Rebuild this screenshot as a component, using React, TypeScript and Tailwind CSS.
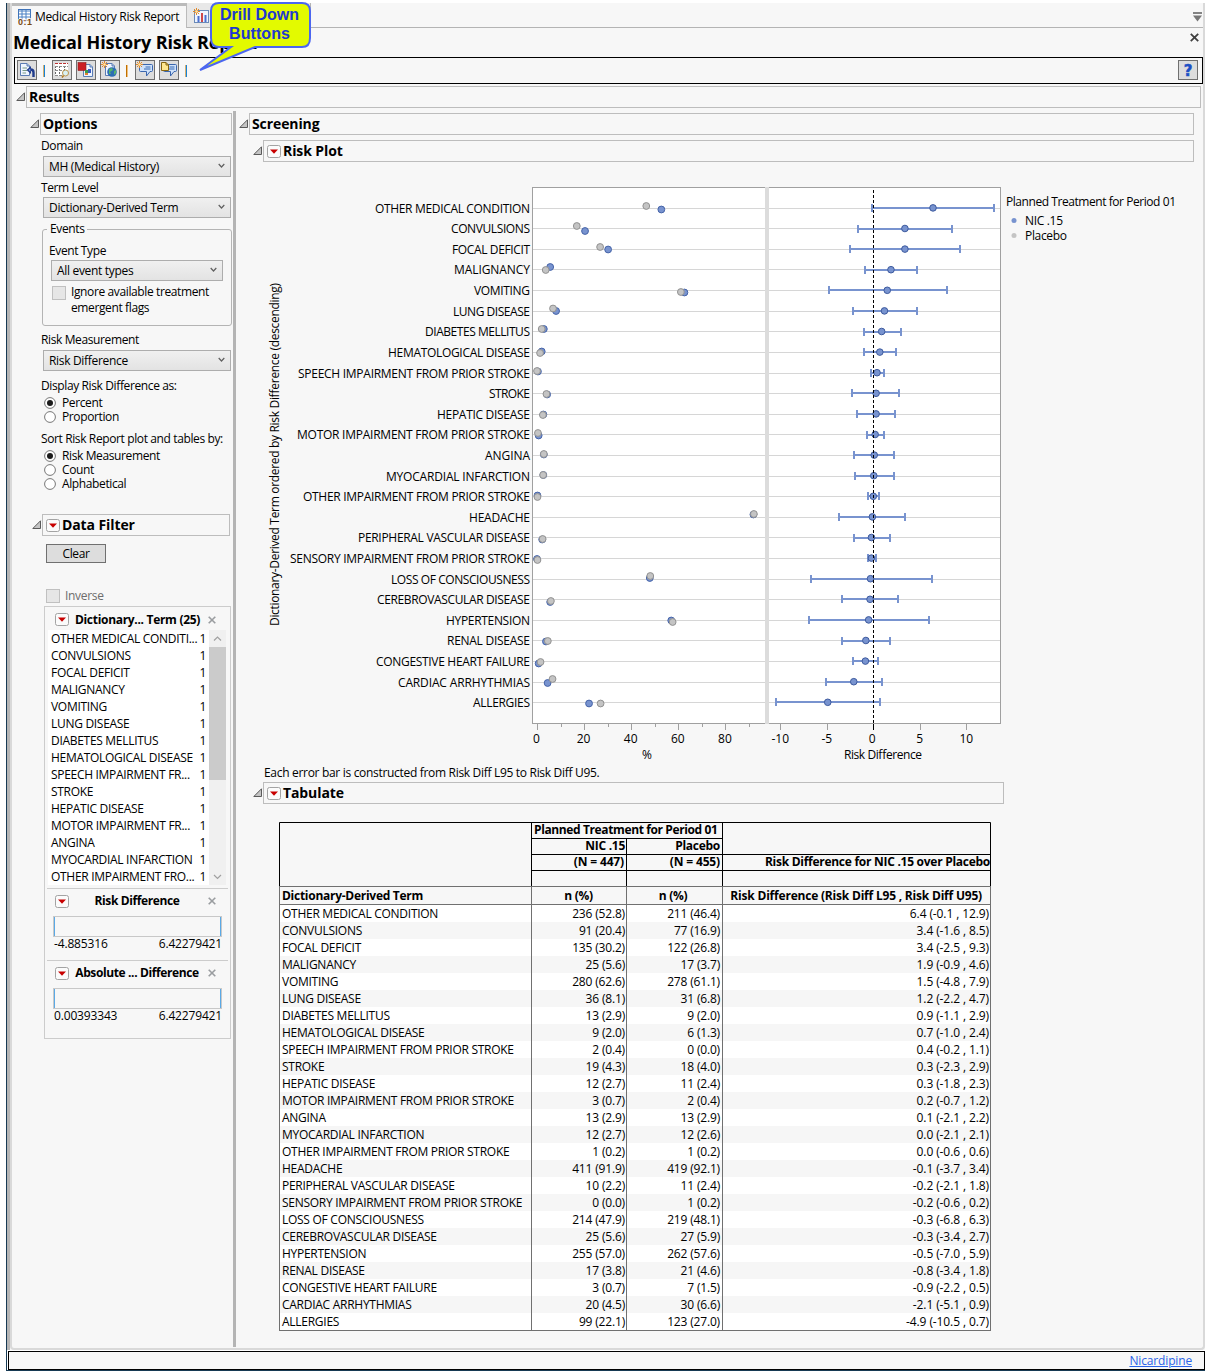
import type { ReactNode } from "react";

type Row = {
  term: string;
  labelWidth: number;
  nic: string;
  placebo: string;
  diff: string;
  // plotted values: percent NIC, percent placebo, risk diff, lower, upper
  v: [number, number, number, number, number];
  // jittered heights of the two dots
  y: [number, number];
};

const ROWS: Row[] = [
  { term: "OTHER MEDICAL CONDITION", labelWidth: 155, nic: "236 (52.8)", placebo: "211 (46.4)", diff: "6.4 (-0.1 , 12.9)", v: [52.8, 46.4, 6.42, -0.1, 12.95], y: [209.5, 206] },
  { term: "CONVULSIONS", labelWidth: 79, nic: "91 (20.4)", placebo: "77 (16.9)", diff: "3.4 (-1.6 , 8.5)", v: [20.4, 16.9, 3.4, -1.65, 8.5], y: [231, 226] },
  { term: "FOCAL DEFICIT", labelWidth: 78, nic: "135 (30.2)", placebo: "122 (26.8)", diff: "3.4 (-2.5 , 9.3)", v: [30.2, 26.8, 3.4, -2.5, 9.3], y: [249.5, 247] },
  { term: "MALIGNANCY", labelWidth: 76, nic: "25 (5.6)", placebo: "17 (3.7)", diff: "1.9 (-0.9 , 4.6)", v: [5.6, 3.7, 1.9, -0.9, 4.65], y: [267, 270] },
  { term: "VOMITING", labelWidth: 56, nic: "280 (62.6)", placebo: "278 (61.1)", diff: "1.5 (-4.8 , 7.9)", v: [62.6, 61.1, 1.5, -4.8, 7.9], y: [292.5, 292] },
  { term: "LUNG DISEASE", labelWidth: 77, nic: "36 (8.1)", placebo: "31 (6.8)", diff: "1.2 (-2.2 , 4.7)", v: [8.1, 6.8, 1.2, -2.2, 4.7], y: [311, 308.5] },
  { term: "DIABETES MELLITUS", labelWidth: 105, nic: "13 (2.9)", placebo: "9 (2.0)", diff: "0.9 (-1.1 , 2.9)", v: [2.9, 2, 0.9, -1, 2.95], y: [329, 329] },
  { term: "HEMATOLOGICAL DISEASE", labelWidth: 142, nic: "9 (2.0)", placebo: "6 (1.3)", diff: "0.7 (-1.0 , 2.4)", v: [2, 1.3, 0.7, -0.95, 2.4], y: [351.5, 353] },
  { term: "SPEECH IMPAIRMENT FROM PRIOR STROKE", labelWidth: 232, nic: "2 (0.4)", placebo: "0 (0.0)", diff: "0.4 (-0.2 , 1.1)", v: [0.4, 0, 0.4, -0.2, 1.1], y: [371.5, 371] },
  { term: "STROKE", labelWidth: 41, nic: "19 (4.3)", placebo: "18 (4.0)", diff: "0.3 (-2.3 , 2.9)", v: [4.3, 4, 0.3, -2.3, 2.8], y: [394.5, 394] },
  { term: "HEPATIC DISEASE", labelWidth: 93, nic: "12 (2.7)", placebo: "11 (2.4)", diff: "0.3 (-1.8 , 2.3)", v: [2.7, 2.5, 0.3, -1.8, 2.3], y: [414.5, 415] },
  { term: "MOTOR IMPAIRMENT FROM PRIOR STROKE", labelWidth: 233, nic: "3 (0.7)", placebo: "2 (0.4)", diff: "0.2 (-0.7 , 1.2)", v: [0.7, 0.4, 0.2, -0.7, 1.2], y: [435.5, 433] },
  { term: "ANGINA", labelWidth: 45, nic: "13 (2.9)", placebo: "13 (2.9)", diff: "0.1 (-2.1 , 2.2)", v: [2.9, 2.9, 0.1, -2.1, 2.2], y: [454.5, 454] },
  { term: "MYOCARDIAL INFARCTION", labelWidth: 144, nic: "12 (2.7)", placebo: "12 (2.6)", diff: "0.0 (-2.1 , 2.1)", v: [2.7, 2.6, 0.05, -2, 2.2], y: [475, 475] },
  { term: "OTHER IMPAIRMENT FROM PRIOR STROKE", labelWidth: 227, nic: "1 (0.2)", placebo: "1 (0.2)", diff: "0.0 (-0.6 , 0.6)", v: [0.2, 0.2, 0, -0.6, 0.6], y: [495.5, 497] },
  { term: "HEADACHE", labelWidth: 61, nic: "411 (91.9)", placebo: "419 (92.1)", diff: "-0.1 (-3.7 , 3.4)", v: [91.9, 92.1, -0.1, -3.7, 3.4], y: [514.5, 514] },
  { term: "PERIPHERAL VASCULAR DISEASE", labelWidth: 172, nic: "10 (2.2)", placebo: "11 (2.4)", diff: "-0.2 (-2.1 , 1.8)", v: [2.2, 2.4, -0.2, -2.1, 1.8], y: [539.5, 539] },
  { term: "SENSORY IMPAIRMENT FROM PRIOR STROKE", labelWidth: 240, nic: "0 (0.0)", placebo: "1 (0.2)", diff: "-0.2 (-0.6 , 0.2)", v: [0, 0.2, -0.2, -0.6, 0.25], y: [559, 560] },
  { term: "LOSS OF CONSCIOUSNESS", labelWidth: 139, nic: "214 (47.9)", placebo: "219 (48.1)", diff: "-0.3 (-6.8 , 6.3)", v: [47.9, 48.1, -0.3, -6.7, 6.3], y: [578, 576] },
  { term: "CEREBROVASCULAR DISEASE", labelWidth: 153, nic: "25 (5.6)", placebo: "27 (5.9)", diff: "-0.3 (-3.4 , 2.7)", v: [5.6, 5.9, -0.35, -3.4, 2.7], y: [602, 601] },
  { term: "HYPERTENSION", labelWidth: 84, nic: "255 (57.0)", placebo: "262 (57.6)", diff: "-0.5 (-7.0 , 5.9)", v: [57, 57.6, -0.5, -6.9, 5.95], y: [620.5, 622] },
  { term: "RENAL DISEASE", labelWidth: 83, nic: "17 (3.8)", placebo: "21 (4.6)", diff: "-0.8 (-3.4 , 1.8)", v: [3.8, 4.6, -0.8, -3.4, 1.75], y: [641.5, 641] },
  { term: "CONGESTIVE HEART FAILURE", labelWidth: 154, nic: "3 (0.7)", placebo: "7 (1.5)", diff: "-0.9 (-2.2 , 0.5)", v: [0.7, 1.5, -0.85, -2.2, 0.5], y: [663.5, 662] },
  { term: "CARDIAC ARRHYTHMIAS", labelWidth: 132, nic: "20 (4.5)", placebo: "30 (6.6)", diff: "-2.1 (-5.1 , 0.9)", v: [4.5, 6.6, -2.1, -5.1, 0.9], y: [683, 679] },
  { term: "ALLERGIES", labelWidth: 57, nic: "99 (22.1)", placebo: "123 (27.0)", diff: "-4.9 (-10.5 , 0.7)", v: [22.1, 27, -4.9, -10.45, 0.7], y: [703.5, 703.5] },
];

const FILTER_ITEMS = [
  "OTHER MEDICAL CONDITI...",
  "CONVULSIONS",
  "FOCAL DEFICIT",
  "MALIGNANCY",
  "VOMITING",
  "LUNG DISEASE",
  "DIABETES MELLITUS",
  "HEMATOLOGICAL DISEASE",
  "SPEECH IMPAIRMENT FR...",
  "STROKE",
  "HEPATIC DISEASE",
  "MOTOR IMPAIRMENT FR...",
  "ANGINA",
  "MYOCARDIAL INFARCTION",
  "OTHER IMPAIRMENT FRO...",
];

const px = (v: number) => 537 + v * 2.355;
const rx = (v: number) => 873.3 + v * 9.3;
const rowY = (i: number) => Math.floor(208.15 + i * 20.61) + 0.5;
const barY = (i: number) => Math.round(208 + i * 20.6);

function Disclosure() {
  return (
    <svg width="10" height="10" viewBox="0 0 10 10" className="shrink-0">
      <path d="M8.5 0.8V8.5H0.8Z" fill="#c4c4c4" stroke="#5a5a5a" />
    </svg>
  );
}

function RedMenu() {
  return (
    <svg width="14" height="13" viewBox="0 0 14 13" className="shrink-0">
      <rect x="0.5" y="0.5" width="13" height="12" rx="2" fill="#fbfbfb" stroke="#a3a3a3" />
      <path d="M3 4.5H11L7 8.7Z" fill="#c80000" />
    </svg>
  );
}

function OutlineBox({ title, menu, width }: { title: string; menu?: boolean; width: string }) {
  return (
    <div className="flex h-[22px] items-center">
      <Disclosure />
      <div className={`flex h-[22px] shrink-0 items-center border border-[#bdbdbd] text-[14px] font-bold leading-none ${menu ? "gap-[2px] pl-[3px]" : "pl-[2px]"} ${width}`}>
        {menu && <RedMenu />}
        <span className="tracking-[-0.1px]">{title}</span>
      </div>
    </div>
  );
}

function Select({ value, width }: { value: string; width: string }) {
  return (
    <div className={`flex h-[21px] items-center justify-between border border-[#adadad] bg-linear-to-b from-[#f0f0f0] to-[#e3e3e3] pr-[5px] pl-[5px] ${width}`}>
      <span className="tracking-[-0.32px]">{value}</span>
      <svg width="7" height="6" viewBox="0 0 7 6" className="mb-[2px]">
        <path d="M0.7 1L3.5 4L6.3 1" fill="none" stroke="#606060" strokeWidth="1.2" />
      </svg>
    </div>
  );
}

function Radio({ label, checked }: { label: string; checked?: boolean }) {
  return (
    <div className="flex h-[14px] items-center gap-[6px] pl-[3px]">
      <svg width="12" height="12" viewBox="0 0 12 12">
        <circle cx="6" cy="6" r="5.4" fill="#fff" stroke="#777" />
        {checked && <circle cx="6" cy="6" r="3" fill="#1c1c1c" />}
      </svg>
      <span>{label}</span>
    </div>
  );
}

function CloseMark({ color, size }: { color: string; size: number }) {
  return (
    <svg width={size} height={size} viewBox="0 0 8 8" className="shrink-0">
      <path d="M0.7 0.7L7.3 7.3M7.3 0.7L0.7 7.3" stroke={color} strokeWidth="1.6" />
    </svg>
  );
}

function ToolButton({ children }: { children: ReactNode }) {
  return (
    <div className="flex size-5 items-center justify-center border border-[#707070] bg-[#dddddd]">
      <svg width="18" height="18" viewBox="0 0 18 18">
        {children}
      </svg>
    </div>
  );
}

function Sep({ flip }: { flip?: boolean }) {
  return (
    <div className="flex h-[21px] w-[15px] items-center pl-[6px]">
      <div className={flip ? "h-3 w-px bg-[#c07000]" : "h-3 w-px bg-[#d8b070]"} />
      <div className={flip ? "h-3 w-px bg-[#f0c080]" : "h-3 w-px bg-[#1883d7]"} />
    </div>
  );
}

function Page({ x, y }: { x: number; y: number }) {
  return (
    <g transform={`translate(${x} ${y})`}>
      <path d="M0.5 0.5H7L9.5 3V12.5H0.5Z" fill="#eef5ff" stroke="#5b7cb4" />
      <path d="M7 0.5V3H9.5" fill="#b8cbe8" stroke="#5b7cb4" />
    </g>
  );
}

function Bubble() {
  return (
    <g>
      <path d="M3.5 4.5Q3.5 3.5 4.5 3.5H15.5Q16.5 3.5 16.5 4.5V9.5Q16.5 10.5 15.5 10.5H14L10.5 15V10.5H4.5Q3.5 10.5 3.5 9.5Z" fill="#cfe2fa" stroke="#3a66ae" />
      <path d="M9.5 6H14.5M8 8H14.5" stroke="#3568b5" />
    </g>
  );
}

function Star({ x, y }: { x: number; y: number }) {
  return (
    <g transform={`translate(${x} ${y})`}>
      <path d="M3.5 0V7M0 3.5H7M1 1L6 6M6 1L1 6" stroke="#e08a2c" />
      <circle cx="3.5" cy="3.5" r="1.3" fill="#ffe7a8" />
    </g>
  );
}

function Toolbar() {
  return (
    <div className="ml-[2px] flex h-[27px] w-[1189px] items-start border border-black pt-[2px] pr-[4px] pl-[2px]">
      <ToolButton>
        <Page x={2} y={2} />
        <path d="M4.5 7H9M4.5 9.5H9M4.5 12H8" stroke="#7a9b87" />
        <path d="M15.5 16V11.5Q15.5 8.5 12.5 8.5" fill="none" stroke="#203c8c" strokeWidth="2.4" />
        <path d="M8.5 9L13 5V13Z" fill="#203c8c" />
        <path d="M10.5 9L12.3 7.5V10.5Z" fill="#7fa0e8" />
      </ToolButton>
      <Sep />
      <div className="flex gap-1">
        <ToolButton>
          <rect x="2" y="2" width="13" height="13" fill="#fff" />
          <path d="M2 2.5H15" stroke="#b33" strokeDasharray="3 1" />
          <path d="M2.5 5V15M6.5 5V15M11.5 5V10" stroke="#666" strokeDasharray="2 1" />
          <path d="M2 5.5H15M2 9.5H11M2 14.5H9" stroke="#8d8d8d" strokeDasharray="3 1" />
          <circle cx="12.5" cy="12" r="3" fill="#d9f2f5" stroke="#bb934d" />
          <path d="M10.5 14.5L9 16.5" stroke="#b07a20" strokeWidth="1.5" />
        </ToolButton>
        <ToolButton>
          <Page x={6} y={3} />
          <rect x="1" y="1.5" width="8" height="8" fill="#cb2026" stroke="#8d2020" strokeWidth="0.6" />
          <rect x="8" y="9" width="3" height="4" fill="#3a9d4c" />
          <rect x="11" y="8" width="3" height="4" fill="#3a5cc0" />
          <rect x="8" y="12" width="3" height="2" fill="#e08030" />
        </ToolButton>
        <ToolButton>
          <Page x={4} y={2} />
          <circle cx="11" cy="11" r="4.8" fill="#2c6db4" />
          <path d="M8 8L11 7L12 9L9 11L10 13L8 13ZM13 10L15 9V12L13 14Z" fill="#55b46d" />
          <Star x={0} y={0} />
        </ToolButton>
      </div>
      <Sep flip />
      <div className="flex gap-1">
        <ToolButton>
          <Bubble />
          <Star x={0} y={0} />
        </ToolButton>
        <ToolButton>
          <Bubble />
          <path d="M1.5 1.5H6L8.5 4V9.5H1.5Z" fill="#ffe790" stroke="#87650f" />
          <path d="M6 1.5V4H8.5" fill="none" stroke="#87650f" />
        </ToolButton>
      </div>
      <Sep />
      <div className="ml-auto">
        <ToolButton>
          <text x="9" y="14.5" textAnchor="middle" fontFamily="DejaVu Sans" fontWeight="700" fontSize="15" fill="#1d4fc4" stroke="#1d4fc4" strokeWidth="0.5">?</text>
        </ToolButton>
      </div>
    </div>
  );
}

function TabStrip() {
  return (
    <div className="flex h-[25px] w-[1191px]">
      <div className="flex h-[25px] w-[175px] items-center gap-[2px] border-t-[3px] border-r border-[#bbbbbb] pl-[6px]">
        <svg width="15" height="16" viewBox="0 0 15 16" className="shrink-0">
          <rect x="0.5" y="0.5" width="12" height="11" fill="#fff" stroke="#3f73b8" />
          <path d="M0 2H13M1 5H13M1 8H13M4 1V11M8 1V11" stroke="#4a80c4" />
          <text x="0" y="15.5" fontSize="9" fontWeight="700" fontFamily="Liberation Sans" fill="#7b4a10" stroke="#f7f7f7" strokeWidth="1.5" paintOrder="stroke" textLength="14">0:1</text>
        </svg>
        <span className="tracking-[-0.33px] whitespace-nowrap">Medical History Risk Report</span>
      </div>
      <div className="flex h-[25px] w-[124px] items-start border-r border-b border-[#b4b4b4] bg-[#e8e8e8] pt-[5px] pl-[6px]">
        <svg width="17" height="16" viewBox="0 0 17 16">
          <rect x="1.5" y="2.5" width="14" height="12" fill="#eef4ff" stroke="#6a8ab8" />
          <path d="M5.5 14V8M12.5 14V7" stroke="#4a6fd0" strokeWidth="2" />
          <path d="M9 14V5" stroke="#d04848" strokeWidth="2" />
          <Star x={0} y={0} />
        </svg>
      </div>
      <div className="flex flex-1 justify-end border-b border-[#b4b4b4] pt-[9px] pr-px">
        <svg width="9" height="10" viewBox="0 0 9 10">
          <path d="M0 1H9" stroke="#666" strokeWidth="1.6" />
          <path d="M0 3.5H9L4.5 9.5Z" fill="#777" />
        </svg>
      </div>
    </div>
  );
}

function RangeFilter({ title, min, max }: { title: string; min: string; max: string }) {
  return (
    <div className="mx-[2px] h-[72px] border-t border-[#cccccc]">
      <div className="flex h-[24px] items-center pr-[12px] pl-[8px]">
        <RedMenu />
        <span className="flex-1 pr-[3px] text-center font-bold tracking-[-0.38px] whitespace-nowrap">{title}</span>
        <CloseMark color="#9a9da0" size={8} />
      </div>
      <div className="mt-[3px] ml-[6px] h-[21px] w-[169px] border border-[#c8c8c8]">
        <div className="h-[19px] border-r border-l border-[#5aa9e6]" />
      </div>
      <div className="-mt-px flex h-[15px] w-[175px] items-center justify-between pl-[7px] tracking-[-0.16px]">
        <span>{min}</span>
        <span>{max}</span>
      </div>
    </div>
  );
}

function OptionsPanel() {
  return (
    <div className="w-[221px] pt-[2px] pl-[12px] text-[12px] leading-[14px] tracking-[-0.38px]">
      <div className="pl-[6px]">
        <OutlineBox title="Options" width="w-[192px]" />
      </div>
      <div className="pl-[17px]">
        <div className="mt-[4px]">Domain</div>
        <div className="mt-[3px] ml-[2px]"><Select value="MH (Medical History)" width="w-[188px]" /></div>
        <div className="mt-[4px]">Term Level</div>
        <div className="mt-[2px] ml-[2px]"><Select value="Dictionary-Derived Term" width="w-[188px]" /></div>
        <fieldset className="mt-[4px] ml-px h-[104px] w-[190px] rounded-[3px] border border-[#b4b4b4] pl-[7px]">
          <legend className="-ml-[3px] px-[3px]">Events</legend>
          <div className="-ml-px mt-[8px]">Event Type</div>
          <div className="mt-[2px] ml-px"><Select value="All event types" width="w-[172px]" /></div>
          <div className="mt-[4px] ml-[2px] flex gap-[5px]">
            <div className="mt-px size-[14px] shrink-0 border border-[#c0c0c0] bg-[#e6e6e6]" />
            <div className="-mt-px leading-[16px] whitespace-nowrap">Ignore available treatment<br />emergent flags</div>
          </div>
        </fieldset>
        <div className="mt-[7px]">Risk Measurement</div>
        <div className="mt-[3px] ml-[2px]"><Select value="Risk Difference" width="w-[188px]" /></div>
        <div className="mt-[8px] mb-[3px]">Display Risk Difference as:</div>
        <Radio label="Percent" checked />
        <Radio label="Proportion" />
        <div className="mt-[8px] mb-[3px] whitespace-nowrap">Sort Risk Report plot and tables by:</div>
        <Radio label="Risk Measurement" checked />
        <Radio label="Count" />
        <Radio label="Alphabetical" />
      </div>
      <div className="mt-[23px] pl-[8px]">
        <OutlineBox title="Data Filter" menu width="w-[188px]" />
      </div>
      <div className="mt-[8px] ml-[22px] flex h-[19px] w-[60px] items-center justify-center border border-[#707070] bg-[#dddddd]">Clear</div>
      <div className="mt-[26px] ml-[22px] flex h-[14px] items-center gap-[5px] tracking-[-0.3px] text-[#6d6d6d]">
        <div className="size-[14px] border border-[#c0c0c0] bg-[#e6e6e6]" />
        <span>Inverse</span>
      </div>
      <div className="mt-[3px] ml-[20px] h-[433px] w-[187px] border border-[#cccccc]">
        <div className="flex h-[23px] items-center pt-[2px] pr-[14px] pl-[10px]">
          <RedMenu />
          <span className="flex-1 pr-[2px] text-center font-bold whitespace-nowrap tracking-[-0.3px]">Dictionary... Term (25)</span>
          <CloseMark color="#9a9da0" size={8} />
        </div>
        <div className="ml-[3px] flex h-[255px] w-[178px] bg-white">
          <ul className="flex-1 pr-[3px] pl-[3px]">
            {FILTER_ITEMS.map((item) => (
              <li key={item} className="flex h-[17px] items-center justify-between tracking-[-0.3px] whitespace-nowrap">
                <span>{item}</span>
                <span>1</span>
              </li>
            ))}
          </ul>
          <div className="flex w-[17px] flex-col items-center justify-between bg-[#f0f0f0]">
            <svg width="17" height="17" viewBox="0 0 17 17">
              <path d="M5 10.5L8.5 7L12 10.5" fill="none" stroke="#a0a0a0" strokeWidth="1.2" />
            </svg>
            <div className="mb-auto h-[133px] w-full bg-[#cbcbcb]" />
            <svg width="17" height="17" viewBox="0 0 17 17">
              <path d="M5 7L8.5 10.5L12 7" fill="none" stroke="#a0a0a0" strokeWidth="1.2" />
            </svg>
          </div>
        </div>
        <div className="mt-[3px]">
          <RangeFilter title="Risk Difference" min="-4.885316" max="6.42279421" />
          <RangeFilter title="Absolute ... Difference" min="0.00393343" max="6.42279421" />
        </div>
      </div>
    </div>
  );
}

function RiskPlot() {
  return (
    <svg width="942" height="602" viewBox="252 162 942 602" fontSize="12" fill="#000" className="block">
      <rect x="532.5" y="187.5" width="468" height="536" fill="#fff" stroke="#a0a0a0" />
      {ROWS.map((r, i) => (
        <path key={r.term} d={`M533 ${rowY(i)}H1000`} stroke="#d6d6d6" />
      ))}
      <rect x="765" y="187" width="4" height="537" fill="#dcdcdc" />
      {ROWS.map((r, i) => (
        <text key={r.term} x={530 - r.labelWidth} y={rowY(i) + 4.5} textLength={r.labelWidth}>
          {r.term}
        </text>
      ))}
      {ROWS.map((r, i) => (
        <g key={r.term}>
          <circle cx={px(r.v[0])} cy={r.y[0]} r="3.4" fill="#7893cf" stroke="#4664a8" />
          <circle cx={px(r.v[1])} cy={r.y[1]} r="3.4" fill="#c4c4c4" stroke="#929292" />
          <path
            d={`M${Math.round(rx(r.v[3]))} ${barY(i)}H${Math.round(rx(r.v[4]))}M${Math.round(rx(r.v[3]))} ${barY(i) - 4}v8M${Math.round(rx(r.v[4]))} ${barY(i) - 4}v8`}
            stroke="#7893cf"
            strokeWidth="2"
          />
          <circle cx={rx(r.v[2])} cy={207.9 + i * 20.6} r="3.3" fill="#7893cf" stroke="#3d5a9e" />
        </g>
      ))}
      <path d="M873.5 190V724" stroke="#000" strokeDasharray="3 2" />
      {[0, 20, 40, 60, 80].map((t) => (
        <g key={t}>
          <path d={`M${Math.round(px(t)) + 0.5} 724v6`} stroke="#a0a0a0" />
          <path d={`M${Math.round(px(t + 10)) + 0.5} 724v3`} stroke="#a0a0a0" />
          <text x={px(t) - 0.5} y="743" textAnchor="middle">{t}</text>
        </g>
      ))}
      {[-10, -5, 0, 5, 10].map((t) => (
        <g key={t}>
          <path d={`M${Math.round(rx(t)) + 0.5} 724v6`} stroke={t === 0 ? "#000" : "#a0a0a0"} />
          <text x={rx(t) - (t === 0 ? 1 : 0)} y="743" textAnchor="middle">{t}</text>
        </g>
      ))}
      <text x="642" y="759">%</text>
      <text x="844" y="759" textLength="78">Risk Difference</text>
      <text transform="translate(279 626) rotate(-90)" textLength="343">
        Dictionary-Derived Term ordered by Risk Difference (descending)
      </text>
      <text x="1006" y="206" textLength="170">Planned Treatment for Period 01</text>
      <circle cx="1014" cy="220.5" r="2.5" fill="#7893cf" />
      <text x="1025" y="225" textLength="38">NIC .15</text>
      <circle cx="1014" cy="235.5" r="2.5" fill="#c4c4c4" />
      <text x="1025" y="240" textLength="42">Placebo</text>
    </svg>
  );
}

function Tabulate() {
  return (
    <div className="w-[712px] border border-[#707070] border-t-black text-[12px] leading-[14px] tracking-[-0.27px] whitespace-nowrap">
      <div className="-mx-px grid h-[63px] grid-cols-[252px_191px_267px] border-x border-black font-bold">
        <div className="border-r border-black" />
        <div className="grid grid-rows-[16px_16px_16px_15px] border-r border-black">
          <div className="border-b border-black pl-[2px] tracking-[-0.38px]">Planned Treatment for Period 01</div>
          <div className="grid grid-cols-[95px_95px] border-b border-black text-right">
            <span className="border-r border-black pr-px">NIC .15</span>
            <span className="pr-[2px]">Placebo</span>
          </div>
          <div className="grid grid-cols-[95px_95px] border-b border-black text-right tracking-[-0.15px]">
            <span className="border-r border-black pr-[2px]">(N = 447)</span>
            <span className="pr-[2px]">(N = 455)</span>
          </div>
          <div className="w-[95px] border-r border-black" />
        </div>
        <div className="grid grid-rows-[32px_16px_15px]">
          <div className="border-b border-black" />
          <div className="border-b border-black text-right">Risk Difference for NIC .15 over Placebo</div>
          <div />
        </div>
      </div>
      <div className="grid h-[19px] grid-cols-[252px_95px_96px_267px] border-t border-b border-[#707070] leading-[18px] font-bold">
        <span className="border-r border-[#707070] pl-[2px]">Dictionary-Derived Term</span>
        <span className="border-r border-[#707070] pr-px text-center">n (%)</span>
        <span className="border-r border-[#707070] pr-[3px] text-center">n (%)</span>
        <span className="pr-[8px] text-right tracking-[-0.2px]">Risk Difference (Risk Diff L95 , Risk Diff U95)</span>
      </div>
      {ROWS.map((r) => (
        <div key={r.term} className="grid h-[17px] grid-cols-[252px_95px_96px_267px] leading-[17px] odd:bg-white even:bg-[#f6f6f6]">
          <span className="border-r border-[#707070] pl-[2px]">{r.term}</span>
          <span className="border-r border-[#707070] pr-px text-right tracking-[-0.17px]">{r.nic}</span>
          <span className="border-r border-[#707070] pr-[2px] text-right tracking-[-0.17px]">{r.placebo}</span>
          <span className="pr-px text-right tracking-[-0.1px]">{r.diff}</span>
        </div>
      ))}
    </div>
  );
}

function Callout() {
  return (
    <svg width="118" height="74" viewBox="196 0 118 74" className="absolute top-0 left-[196px]">
      <path
        d="M219 3H302Q310 3 310 11V38Q310 47 302 47H255L200 70L231 47H219Q211 47 211 38V11Q211 3 219 3Z"
        fill="#e3fa00"
        stroke="#4b66f0"
        strokeWidth="2"
      />
      <g fontFamily="Liberation Sans" fontWeight="700" fontSize="16" fill="#2038d0">
        <text x="220" y="20" textLength="79">Drill Down</text>
        <text x="229" y="39" textLength="61">Buttons</text>
      </g>
    </svg>
  );
}

export default function App() {
  return (
    <div className="relative h-[1371px] w-[1205px] overflow-hidden bg-white pt-[3px] pl-[6px] font-['Open_Sans','Noto_Sans',sans-serif] text-[12px] text-black">
      <div className="h-[1368px] border-b border-l border-[#173a54]">
        <div className="h-[1347px] border-l-[3px] border-[#b5b5b5] bg-[#f7f7f7]">
          <div className="h-[1347px] rounded-b-[4px] border-2 border-t-0 border-[#d9d9d9]">
            <TabStrip />
            <div className="flex h-[29px] items-start justify-between pr-[4px] pl-[1px]">
              <h1 className="pt-[2px] text-[18px] leading-[24px] font-bold tracking-[-0.15px]">Medical History Risk Report</h1>
              <div className="pt-[5px]"><CloseMark color="#404040" size={9} /></div>
            </div>
            <Toolbar />
            <div className="mt-[2px] pl-[4px]">
              <OutlineBox title="Results" width="w-[1175px]" />
            </div>
            <div className="mt-[3px] flex">
              <div className="w-[221px] shrink-0">
                <OptionsPanel />
              </div>
              <div className="h-[1236px] w-[3px] shrink-0 bg-[#b4b4b4]" />
              <div className="pt-[2px] pl-[3px]">
                <OutlineBox title="Screening" width="w-[945px]" />
                <div className="mt-[5px] pl-[14px]">
                  <OutlineBox title="Risk Plot" menu width="w-[931px]" />
                </div>
                <div className="pl-[13px]">
                  <RiskPlot />
                </div>
                <div className="flex h-[18px] items-center pl-[25px] tracking-[-0.31px]">
                  Each error bar is constructed from Risk Diff L95 to Risk Diff U95.
                </div>
                <div className="pl-[14px]">
                  <OutlineBox title="Tabulate" menu width="w-[741px]" />
                </div>
                <div className="mt-[18px] pl-[40px]">
                  <Tabulate />
                </div>
              </div>
            </div>
          </div>
        </div>
        <div className="mt-px ml-px flex h-[19px] w-[1197px] items-center justify-end border border-black bg-[#f7f7f7] pr-[12px]">
          <a className="tracking-[-0.15px] text-[#2b63e8] underline">Nicardipine</a>
        </div>
      </div>
      <Callout />
    </div>
  );
}
